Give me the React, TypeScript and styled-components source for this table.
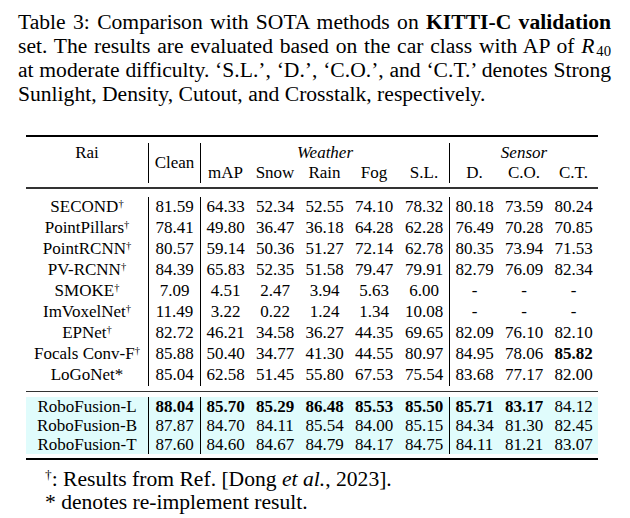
import React from 'react';
import styled, { createGlobalStyle } from 'styled-components';

const GlobalStyle = createGlobalStyle`
  html, body {
    margin: 0;
    padding: 0;
    background: #fff;
  }
  body {
    font-family: "Liberation Serif", "Times New Roman", serif;
    color: #000;
  }
`;

const Page = styled.div`
  width: 630px;
  height: 518px;
  padding: 10px 19px 0 18px;
  box-sizing: border-box;
  overflow: hidden;
`;

const Caption = styled.div`
  width: 593px;
  font-size: 21.6px;
  line-height: 24px;
`;

const CaptionLine = styled.div<{ $last?: boolean }>`
  white-space: nowrap;
  text-align: ${(p) => (p.$last ? 'left' : 'justify')};
  text-align-last: ${(p) => (p.$last ? 'left' : 'justify')};
`;

const Sub = styled.sub`
  margin-left: 2px;
  font-size: 0.68em;
  font-style: normal;
  line-height: 0;
  vertical-align: -0.22em;
`;

const Sup = styled.sup`
  font-size: 0.62em;
  line-height: 0;
  vertical-align: 0.5em;
`;

const Table = styled.table`
  margin: 29px 0 0 8px;
  width: 572px;
  table-layout: fixed;
  border-collapse: separate;
  border-spacing: 0;
  font-size: 17px;
`;

const Col = styled.col<{ $w: number }>`
  width: ${(p) => p.$w}px;
`;

const Row = styled.tr<{ $h: number; $hl?: boolean }>`
  height: ${(p) => p.$h}px;
  background: ${(p) => (p.$hl ? '#e0fcfc' : 'transparent')};
`;

const Cell = styled.td<{ $sep?: boolean; $bold?: boolean; $italic?: boolean }>`
  padding: 0;
  text-align: center;
  vertical-align: middle;
  line-height: 18px;
  white-space: nowrap;
  border-left: ${(p) => (p.$sep ? '1.2px solid #000' : 'none')};
  font-weight: ${(p) => (p.$bold ? 700 : 400)};
  font-style: ${(p) => (p.$italic ? 'italic' : 'normal')};
`;

const RuleCell = styled.td<{ $top: number; $bottom: number }>`
  padding: ${(p) => `${p.$top}px 0 ${p.$bottom}px`};
`;

const RuleLine = styled.div<{ $weight: number; $color: string }>`
  height: ${(p) => p.$weight}px;
  background: ${(p) => p.$color};
`;

const Notes = styled.div`
  margin-top: 8px;
  padding-left: 27px;
  font-size: 21.6px;
  line-height: 23px;
`;

type Entry = {
  name: string;
  mark?: 'dagger' | 'star';
  vals: string[];
  bold?: number[];
};

const baselines: Entry[] = [
  { name: 'SECOND', mark: 'dagger', vals: ['81.59', '64.33', '52.34', '52.55', '74.10', '78.32', '80.18', '73.59', '80.24'] },
  { name: 'PointPillars', mark: 'dagger', vals: ['78.41', '49.80', '36.47', '36.18', '64.28', '62.28', '76.49', '70.28', '70.85'] },
  { name: 'PointRCNN', mark: 'dagger', vals: ['80.57', '59.14', '50.36', '51.27', '72.14', '62.78', '80.35', '73.94', '71.53'] },
  { name: 'PV-RCNN', mark: 'dagger', vals: ['84.39', '65.83', '52.35', '51.58', '79.47', '79.91', '82.79', '76.09', '82.34'] },
  { name: 'SMOKE', mark: 'dagger', vals: ['7.09', '4.51', '2.47', '3.94', '5.63', '6.00', '-', '-', '-'] },
  { name: 'ImVoxelNet', mark: 'dagger', vals: ['11.49', '3.22', '0.22', '1.24', '1.34', '10.08', '-', '-', '-'] },
  { name: 'EPNet', mark: 'dagger', vals: ['82.72', '46.21', '34.58', '36.27', '44.35', '69.65', '82.09', '76.10', '82.10'] },
  { name: 'Focals Conv-F', mark: 'dagger', vals: ['85.88', '50.40', '34.77', '41.30', '44.55', '80.97', '84.95', '78.06', '85.82'], bold: [8] },
  { name: 'LoGoNet', mark: 'star', vals: ['85.04', '62.58', '51.45', '55.80', '67.53', '75.54', '83.68', '77.17', '82.00'] },
];

const ours: Entry[] = [
  { name: 'RoboFusion-L', vals: ['88.04', '85.70', '85.29', '86.48', '85.53', '85.50', '85.71', '83.17', '84.12'], bold: [0, 1, 2, 3, 4, 5, 6, 7] },
  { name: 'RoboFusion-B', vals: ['87.87', '84.70', '84.11', '85.54', '84.00', '85.15', '84.34', '81.30', '82.45'] },
  { name: 'RoboFusion-T', vals: ['87.60', '84.60', '84.67', '84.79', '84.17', '84.75', '84.11', '81.21', '83.07'] },
];

const widths = [122, 52, 50, 50, 49, 50, 50, 50, 50, 49];
const sepAt = [0, 1, 6];

function Rule({ top, bottom, weight, color }: { top: number; bottom: number; weight: number; color: string }) {
  return (
    <tr>
      <RuleCell colSpan={10} $top={top} $bottom={bottom}>
        <RuleLine $weight={weight} $color={color} />
      </RuleCell>
    </tr>
  );
}

function DataRow({ entry, h, hl }: { entry: Entry; h: number; hl?: boolean }) {
  return (
    <Row $h={h} $hl={hl}>
      <Cell>
        {entry.name}
        {entry.mark === 'dagger' && <Sup>†</Sup>}
        {entry.mark === 'star' && '*'}
      </Cell>
      {entry.vals.map((v, i) => (
        <Cell key={i} $sep={sepAt.includes(i)} $bold={entry.bold?.includes(i)}>
          {v}
        </Cell>
      ))}
    </Row>
  );
}

export default function App() {
  return (
    <Page>
      <GlobalStyle />
      <Caption>
        <CaptionLine>
          Table 3: Comparison with SOTA methods on <b>KITTI-C validation</b>
        </CaptionLine>
        <CaptionLine>
          set. The results are evaluated based on the car class with AP of <i>R</i>
          <Sub>40</Sub>
        </CaptionLine>
        <CaptionLine>
          at moderate difficulty. ‘S.L.’, ‘D.’, ‘C.O.’, and ‘C.T.’ denotes Strong
        </CaptionLine>
        <CaptionLine $last>Sunlight, Density, Cutout, and Crosstalk, respectively.</CaptionLine>
      </Caption>

      <Table>
        <colgroup>
          {widths.map((w, i) => (
            <Col key={i} $w={w} />
          ))}
        </colgroup>
        <tbody>
          <Rule top={0} bottom={6} weight={2} color="#000" />
          <Row $h={20}>
            <Cell>Rai</Cell>
            <Cell rowSpan={2} $sep>
              Clean
            </Cell>
            <Cell colSpan={5} $sep $italic>
              Weather
            </Cell>
            <Cell colSpan={3} $sep $italic>
              Sensor
            </Cell>
          </Row>
          <Row $h={20}>
            <Cell />
            <Cell $sep>mAP</Cell>
            <Cell>Snow</Cell>
            <Cell>Rain</Cell>
            <Cell>Fog</Cell>
            <Cell>S.L.</Cell>
            <Cell $sep>D.</Cell>
            <Cell>C.O.</Cell>
            <Cell>C.T.</Cell>
          </Row>
          <Rule top={4} bottom={8} weight={1.5} color="#333" />
          {baselines.map((e) => (
            <DataRow key={e.name} entry={e} h={21} />
          ))}
          <Rule top={5} bottom={5} weight={1.5} color="#333" />
          {ours.map((e) => (
            <DataRow key={e.name} entry={e} h={19} hl />
          ))}
          <Rule top={4} bottom={0} weight={2} color="#000" />
        </tbody>
      </Table>

      <Notes>
        <div>
          <Sup>†</Sup>: Results from Ref. [Dong <i>et al.</i>, 2023].
        </div>
        <div>* denotes re-implement result.</div>
      </Notes>
    </Page>
  );
}
